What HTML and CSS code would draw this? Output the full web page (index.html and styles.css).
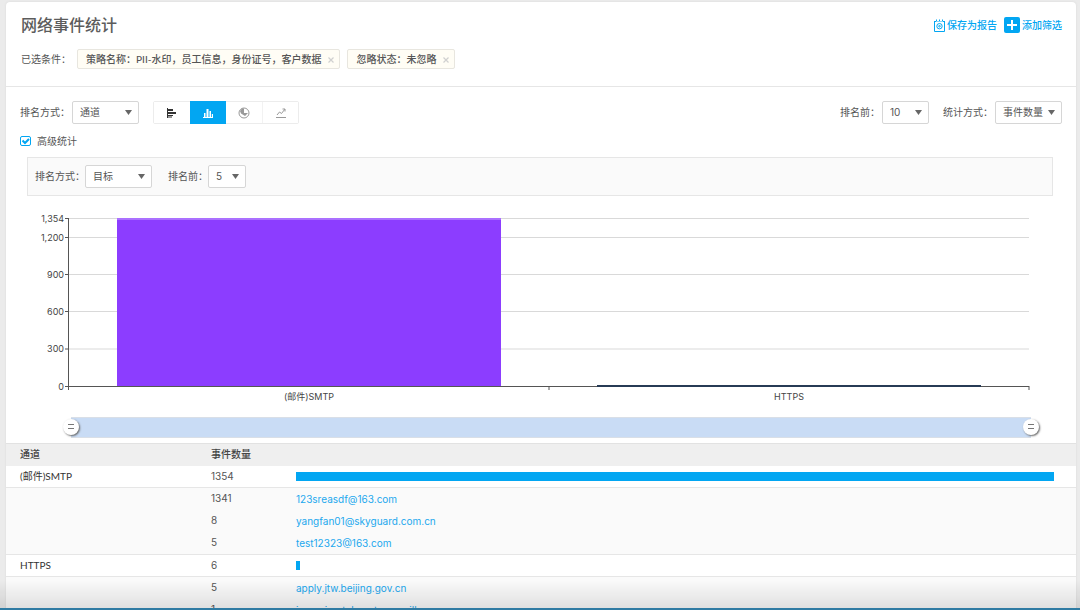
FILE: index.html
```html
<!DOCTYPE html>
<html lang="zh-CN">
<head>
<meta charset="utf-8">
<meta name="viewport" content="width=device-width, initial-scale=1">
<title>网络事件统计</title>
<link rel="stylesheet" href="styles.css">
</head>
<body>
<main class="card">
  <header class="head">
    <div class="head-row">
      <h1 class="title">网络事件统计</h1>
      <nav class="actions">
        <a class="action" href="#save">
          <svg class="icon-report" viewBox="0 0 11 13" aria-hidden="true"><path d="M.5 2v10.500h10V2M.5 2.500h1.500M9 2.500h1.500M2.500.5v2M5.500.5v2M8.500.5v2M3.500 2.500h1M6.500 2.500h1"/><circle cx="5.500" cy="7.200" r="2.700"/><circle cx="5.500" cy="7.200" r=".8"/></svg>
          <span>保存为报告</span>
        </a>
        <a class="action" href="#filter">
          <svg class="icon-plus" viewBox="0 0 16 16" aria-hidden="true"><rect width="16" height="16" rx="2"/><path d="M8 3v10M3 8h10"/></svg>
          <span>添加筛选</span>
        </a>
      </nav>
    </div>
    <div class="conditions">
      <span class="conditions-label">已选条件：</span>
      <span class="tag">策略名称：PII-水印，员工信息，身份证号，客户数据<button class="tag-close" aria-label="移除策略名称"><svg viewBox="0 0 6 6" aria-hidden="true"><path d="M.5.5l5 5M5.500.5l-5 5"/></svg></button></span>
      <span class="tag">忽略状态：未忽略<button class="tag-close" aria-label="移除忽略状态"><svg viewBox="0 0 6 6" aria-hidden="true"><path d="M.5.5l5 5M5.500.5l-5 5"/></svg></button></span>
    </div>
  </header>

  <section class="controls">
    <div class="toolbar">
      <label class="field-label" for="rank-by">排名方式：</label>
      <select class="select select-wide" id="rank-by"><option>通道</option></select>
      <div class="chart-types">
        <button class="chart-type" aria-label="条形图"><svg viewBox="0 0 12 12" aria-hidden="true"><path class="solid" d="M1 1h1v10H1zM2 2h5v2H2zM2 5h8v2H2zM2 8h5v1H2zM2 9.500h4v1H2z"/></svg></button>
        <button class="chart-type is-active" aria-label="柱状图"><svg viewBox="0 0 12 12" aria-hidden="true"><path class="solid" d="M1 10h10v1H1zM2 6h1.500v4H2zM4.500 2h2v8h-2zM7.500 4H9v6H7.500zM9.800 7H11v3H9.800z"/></svg></button>
        <button class="chart-type is-muted" aria-label="饼图"><svg viewBox="0 0 12 12" aria-hidden="true"><circle class="line" cx="6" cy="6" r="5"/><path class="solid" d="M6 6V1.500H4L2 4l1 2.500L7 9l3-3z"/></svg></button>
        <button class="chart-type is-muted" aria-label="折线图"><svg viewBox="0 0 12 12" aria-hidden="true"><path class="line" d="M1 10.500h10M2 8l2.500-3 2 1.500L10 2M7.500 2H10v2.500"/></svg></button>
      </div>
      <div class="toolbar-right">
        <label class="field-label" for="top-n">排名前：</label>
        <select class="select select-mid" id="top-n"><option>10</option></select>
        <label class="field-label spaced" for="metric">统计方式：</label>
        <select class="select select-wide" id="metric"><option>事件数量</option></select>
      </div>
    </div>
    <label class="advanced"><input class="check" type="checkbox" checked>高级统计</label>
    <div class="subpanel">
      <label class="field-label" for="sub-rank">排名方式：</label>
      <select class="select select-wide" id="sub-rank"><option>目标</option></select>
      <label class="field-label inset" for="sub-top">排名前：</label>
      <select class="select select-small" id="sub-top"><option>5</option></select>
    </div>
  </section>

  <section class="chart">
    <svg class="plot" width="100%" height="192" role="img" aria-label="各通道事件数量">
      <g class="grid">
        <line x1="0" x2="100%" y1="8.500" y2="8.500"/><line x1="0" x2="100%" y1="27.500" y2="27.500"/><line x1="0" x2="100%" y1="64.500" y2="64.500"/><line x1="0" x2="100%" y1="101.500" y2="101.500"/><line x1="0" x2="100%" y1="139" y2="139"/>
      </g>
      <rect class="bar-mail" x="5%" y="8" width="40%" height="168"/>
      <rect class="bar-mail-top" x="5%" y="8" width="40%" height="2"/>
      <g class="axis">
        <path d="M-.5 8v172M-4 8.500h4M-4 27.500h4M-4 64.500h4M-4 101.500h4M-4 139h4M-4 176.500h4"/>
        <line x1="0" x2="100%" y1="176.500" y2="176.500"/>
        <line x1="50%" x2="50%" y1="176" y2="180"/><line x1="100%" x2="100%" y1="176" y2="180"/>
      </g>
      <rect class="bar-https" x="55%" y="175" width="40%" height="2"/>
      <g class="y-labels">
        <text x="-5" y="12">1,354</text><text x="-5" y="31">1,200</text><text x="-5" y="68">900</text><text x="-5" y="105">600</text><text x="-5" y="142">300</text><text x="-5" y="180">0</text>
      </g>
      <g class="x-labels"><text x="25%" y="190">(邮件)SMTP</text><text x="75%" y="190">HTTPS</text></g>
    </svg>
    <div class="zoom">
      <input class="zoom-handle" type="range" min="0" max="100" value="0" aria-label="范围起点">
      <input class="zoom-handle" type="range" min="0" max="100" value="100" aria-label="范围终点">
    </div>
  </section>

  <table class="stats">
    <colgroup><col class="col-name"><col class="col-count"><col></colgroup>
    <thead><tr><th scope="col">通道</th><th scope="col">事件数量</th><td></td></tr></thead>
    <tbody>
      <tr class="group"><th scope="row">(邮件)SMTP</th><td>1354</td><td><div class="meter" style="width:100%"></div></td></tr>
      <tr class="detail"><td></td><td>1341</td><td><a href="#d1">123sreasdf@163.com</a></td></tr>
      <tr class="detail"><td></td><td>8</td><td><a href="#d2">yangfan01@skyguard.com.cn</a></td></tr>
      <tr class="detail"><td></td><td>5</td><td><a href="#d3">test12323@163.com</a></td></tr>
      <tr class="group ruled"><th scope="row">HTTPS</th><td>6</td><td><div class="meter" style="width:0.44%"></div></td></tr>
      <tr class="detail"><td></td><td>5</td><td><a href="#d4">apply.jtw.beijing.gov.cn</a></td></tr>
      <tr class="detail"><td></td><td>1</td><td><a href="#d5">incoming.telemetry.mozilla.org</a></td></tr>
    </tbody>
  </table>
</main>
<div class="bottom-edge" aria-hidden="true"></div>
</body>
</html>
```
FILE: styles.css
```css
* { box-sizing: border-box; }

body {
  margin: 0;
  height: 100vh;
  overflow: hidden;
  padding: 2px 4px 0 6px;
  background: #ebebeb;
  color: #555;
  font: 10px/16px Lato, "Noto Sans CJK SC", sans-serif;
}

a { color: #1ca8ee; text-decoration: none; }
button, select, input { font: inherit; color: inherit; margin: 0; }
button { cursor: pointer; }

.card {
  background: #fff;
  border-radius: 4px 4px 0 0;
  box-shadow: 0 0 2px #d4d4d4;
}

.head {
  padding: 11px 14px 17px 15px;
  border-bottom: 1px solid #e6e6e6;
}
.head-row { display: flex; justify-content: space-between; align-items: center; }
.title { margin: 0; font-size: 16px; line-height: 24px; font-weight: 500; color: #5c5c5c; }
.actions { display: flex; gap: 7px; font-weight: 500; }
.action { display: flex; align-items: center; gap: 2px; color: #02a6f2; }
.icon-report { width: 11px; height: 13px; fill: none; stroke: #02a6f2; }
.icon-plus { width: 16px; height: 16px; fill: #02a6f2; }
.icon-plus path { stroke: #fff; stroke-width: 2; }

.conditions { display: flex; align-items: center; margin-top: 12px; gap: 7px; }
.conditions-label { width: 49px; white-space: nowrap; }
.tag {
  display: flex;
  align-items: center;
  height: 20px;
  padding: 0 5px 0 8px;
  border: 1px solid #e8e6df;
  border-radius: 2px;
  background: #fffdf5;
  font-weight: 500;
}
.tag-close { display: flex; padding: 2px 0 0; margin-left: 7px; border: 0; background: none; }
.tag-close svg { width: 6px; height: 6px; stroke: #d0d0d0; fill: none; stroke-width: 1.2; }

.controls { padding: 14px 14px 0; }
.toolbar, .toolbar-right, .subpanel { display: flex; align-items: center; }
.toolbar-right { margin-left: auto; }
.field-label { width: 52px; padding-bottom: 2px; white-space: nowrap; }
.toolbar-right .field-label { width: 42px; }
.toolbar-right .spaced { width: 52px; margin-left: 14px; }
.field-label.inset { margin-left: 16px; width: 40px; }

.select {
  appearance: none;
  height: 23px;
  padding: 0 16px 2px 7px;
  border: 1px solid #d6d6d6;
  border-radius: 2px;
  background: #fff url("data:image/svg+xml,%3Csvg xmlns='http://www.w3.org/2000/svg' width='7' height='5'%3E%3Cpath d='M0 0h7L3.500 5z' fill='%23666'/%3E%3C/svg%3E") no-repeat right 6px center;
}
.select-wide { width: 67px; }
.select-mid { width: 47px; }
.select-small { width: 38px; }
.select-mid, .select-small { font-family: Inter, sans-serif; }

.chart-types { display: flex; margin-left: 14px; border: 1px solid #ececec; border-radius: 2px; }
.chart-type {
  display: flex;
  align-items: center;
  justify-content: center;
  width: 36px;
  height: 21px;
  padding: 0;
  border: 0;
  background: #fff;
  color: #333;
}
.chart-type svg { width: 12px; height: 12px; }
.chart-type.is-active { background: #02a6f2; color: #fff; height: 23px; margin: -1px 0; }
.chart-type.is-muted { color: #999; }
.chart-type.is-muted + .is-muted { border-left: 1px solid #f2f2f2; }
.solid { fill: currentColor; }
.line { fill: none; stroke: currentColor; }

.advanced { display: flex; align-items: center; gap: 6px; margin-top: 9px; width: max-content; }
.check {
  appearance: none;
  width: 11px;
  height: 10px;
  border: 1px solid #02a6f2;
  border-radius: 2px;
  background: url("data:image/svg+xml,%3Csvg xmlns='http://www.w3.org/2000/svg' width='9' height='8'%3E%3Cpath d='M1.500 3.500L4 6l4-4' fill='none' stroke='%2302a6f2' stroke-width='2'/%3E%3C/svg%3E") no-repeat center;
}
.subpanel {
  margin: 8px 9px 0 7px;
  padding: 7px;
  border: 1px solid #e6e6e6;
  background: #fafafa;
}
.subpanel .field-label:first-child { width: 50px; }

.chart { padding: 14px 47px 5px 63px; }
.plot { display: block; overflow: visible; font: 9px Inter, "Noto Sans CJK SC", sans-serif; }
.grid { stroke: #d9d9d9; }
.axis { stroke: #555; fill: none; }
.bar-mail { fill: #8c3dff; }
.bar-mail-top { fill: #aa70ff; }
.bar-https { fill: #273b55; }
.plot text { fill: #444; }
.y-labels { text-anchor: end; }
.x-labels { text-anchor: middle; }

.zoom {
  position: relative;
  height: 21px;
  margin: 15px -2px 0 2px;
  background: #c9dcf5;
  border-top: 1px solid #d9dfe7;
  border-bottom: 1px solid #d9dfe7;
}
.zoom-handle {
  appearance: none;
  position: absolute;
  inset: 0 -8px;
  width: calc(100% + 16px);
  height: 18px;
  background: none;
  pointer-events: none;
}
.zoom-handle::-webkit-slider-thumb {
  appearance: none;
  width: 16px;
  height: 16px;
  border-radius: 8px;
  background:
    linear-gradient(#777, #777) 5px 5px / 6px 1px no-repeat,
    linear-gradient(#777, #777) 5px 9px / 6px 1px no-repeat,
    #fff;
  box-shadow: 1px 1px 2px #666;
  pointer-events: auto;
}

.stats { width: 100%; border-collapse: separate; border-spacing: 0; table-layout: fixed; }
.col-name { width: 205px; }
.col-count { width: 85px; }
.stats th, .stats td { height: 22px; padding: 0 0 2px; text-align: left; font-weight: 400; }
.stats tr > :first-child { padding-left: 14px; }
.stats tr > :last-child { padding-right: 22px; }
.stats thead th, .stats thead td {
  height: 23px;
  background: #efefef;
  border-top: 1px solid #e2e2e2;
  color: #444;
  font-weight: 500;
}
.group > * { border-bottom: 1px solid #e6e6e6; }
.stats .group > th { color: #333; }
.stats .ruled > * { height: 23px; border-top: 1px solid #e6e6e6; }
.detail { background: #fafafa; }
.stats tbody td { font-family: Inter, sans-serif; }
.stats tbody td:last-child { padding-bottom: 1px; }
.meter { height: 9px; min-width: 4px; background: #02a6f2; }

.bottom-edge {
  position: fixed;
  inset: auto 0 0;
  height: 30px;
  border-bottom: 2px solid #2f7ba3;
  background: linear-gradient(rgba(0, 0, 0, 0), rgba(0, 0, 0, .1));
  pointer-events: none;
}
```
